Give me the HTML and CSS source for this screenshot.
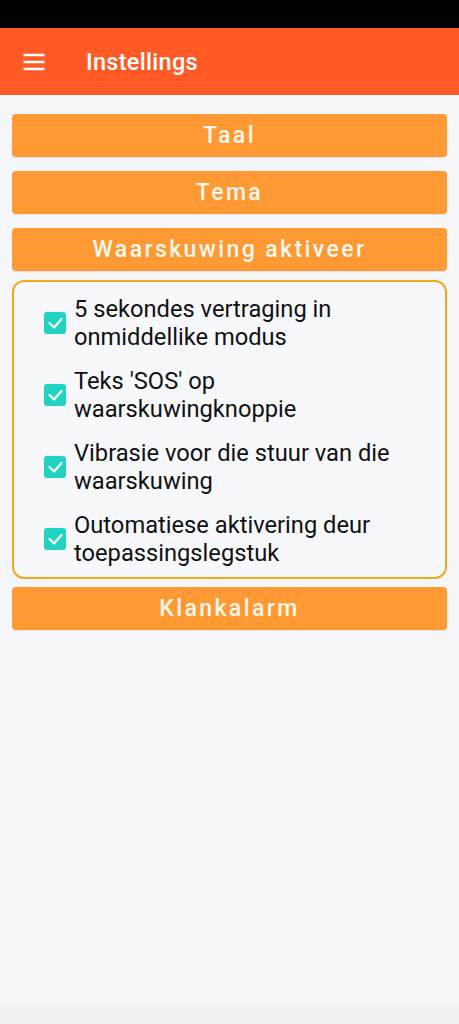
FILE: index.html
```html
<!DOCTYPE html>
<html lang="af">
<head>
<meta charset="utf-8">
<title>Instellings</title>
<link rel="stylesheet" href="styles.css">
</head>
<body>
<div class="app">
  <div class="statusbar"></div>
  <header class="appbar">
    <svg class="menu" width="28" height="28" viewBox="0 0 24 24"><path d="M3 6h18M3 12h18M3 18h18" stroke="#fff" stroke-width="2" fill="none"/></svg>
    <h1 class="title">Instellings</h1>
  </header>
  <main class="content">
    <button class="btn">Taal</button>
    <button class="btn">Tema</button>
    <button class="btn btn-open">Waarskuwing aktiveer</button>
    <section class="panel">
      <label class="item"><span class="check"><svg width="22" height="22" viewBox="0 0 22 22"><path d="M5.5 11l4.5 4.5 7.5-8.5" stroke="#fff" stroke-width="2.2" fill="none" stroke-linecap="round" stroke-linejoin="round"/></svg></span><span class="label">5 sekondes vertraging in onmiddellike modus</span></label>
      <label class="item"><span class="check"><svg width="22" height="22" viewBox="0 0 22 22"><path d="M5.5 11l4.5 4.5 7.5-8.5" stroke="#fff" stroke-width="2.2" fill="none" stroke-linecap="round" stroke-linejoin="round"/></svg></span><span class="label">Teks 'SOS' op waarskuwingknoppie</span></label>
      <label class="item"><span class="check"><svg width="22" height="22" viewBox="0 0 22 22"><path d="M5.5 11l4.5 4.5 7.5-8.5" stroke="#fff" stroke-width="2.2" fill="none" stroke-linecap="round" stroke-linejoin="round"/></svg></span><span class="label">Vibrasie voor die stuur van die waarskuwing</span></label>
      <label class="item"><span class="check"><svg width="22" height="22" viewBox="0 0 22 22"><path d="M5.5 11l4.5 4.5 7.5-8.5" stroke="#fff" stroke-width="2.2" fill="none" stroke-linecap="round" stroke-linejoin="round"/></svg></span><span class="label">Outomatiese aktivering deur toepassingslegstuk</span></label>
    </section>
    <button class="btn">Klankalarm</button>
  </main>
  <div class="navbar"></div>
</div>
</body>
</html>
```
FILE: styles.css
```css
* { box-sizing: border-box; }
html, body { margin: 0; padding: 0; }
body {
  font-family: Roboto, "Noto Sans", sans-serif;
  background: #f5f6fa;
}
.app {
  display: flex;
  flex-direction: column;
  height: 1024px;
}
.statusbar { height: 28px; background: #000; flex: none; }
.appbar {
  height: 67px;
  flex: none;
  background: #ff5a26;
  display: flex;
  align-items: center;
  padding-left: 20px;
}
.menu { display: block; }
.title {
  margin: 0 0 0 38px;
  color: #fff;
  font-size: 23.5px;
  font-weight: 500;
  letter-spacing: 0.3px;
}
.content {
  flex: 1;
  padding: 19px 12px 0;
  display: flex;
  flex-direction: column;
}
.btn {
  height: 43px;
  flex: none;
  border: none;
  border-radius: 4px;
  background: #ff9933;
  color: #fff8ec;
  font-family: Roboto, sans-serif;
  font-size: 23px;
  font-weight: 500;
  letter-spacing: 2.4px;
  margin-bottom: 14px;
  padding: 0;
  box-shadow: 0 1px 1px rgba(0,0,0,0.08);
}
.btn-open { margin-bottom: 9px; }
.panel {
  border: 2px solid #f3a91f;
  border-radius: 12px;
  background: #f7f8fb;
  padding: 13px 16px 10px 30px;
  display: flex;
  flex-direction: column;
  gap: 16px;
  margin-bottom: 8px;
}
.item {
  display: flex;
  align-items: center;
  gap: 8px;
}
.check {
  width: 22px;
  height: 22px;
  flex: none;
  background: #1fd4c1;
  border-radius: 3px;
}
.check svg { display: block; }
.label {
  font-size: 23.7px;
  line-height: 28px;
  color: #111;
}
.navbar { height: 18px; background: #f1f1f1; flex: none; }
```
